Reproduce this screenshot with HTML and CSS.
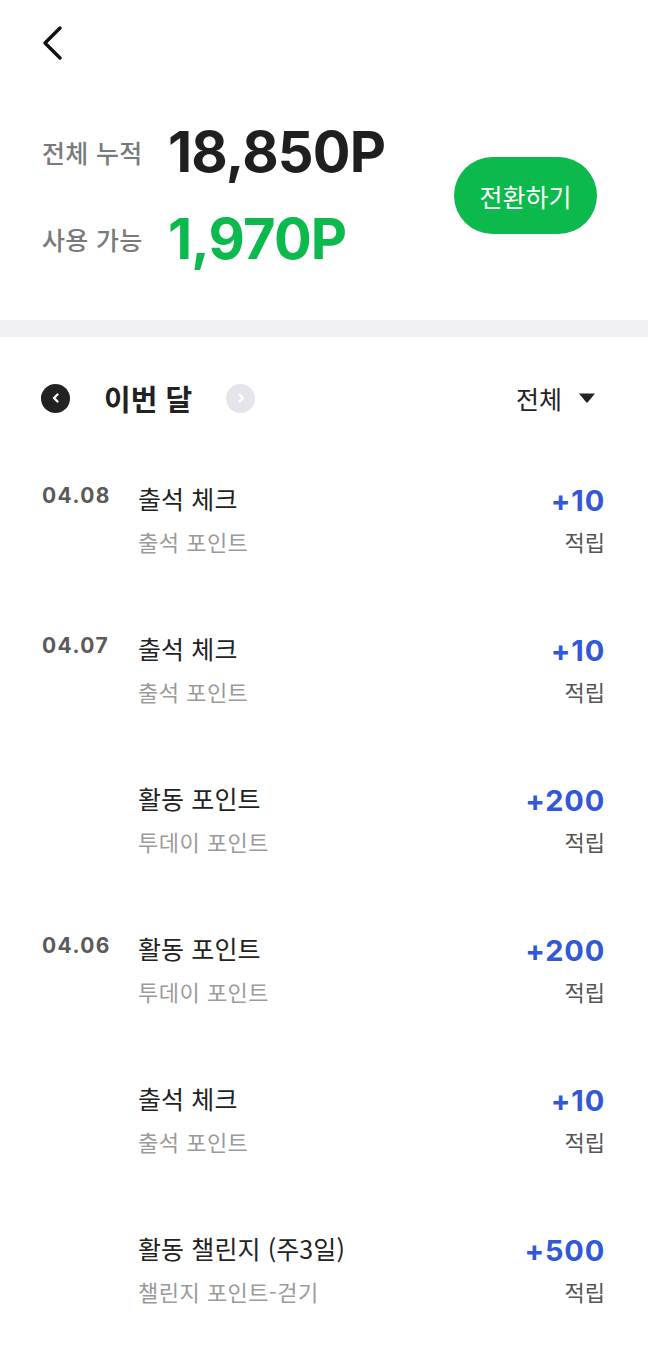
FILE: index.html
```html
<!DOCTYPE html>
<html lang="ko">
<head>
<meta charset="utf-8">
<link rel="stylesheet" href="styles.css">
</head>
<body>
<div class="page">
  <header class="topbar">
    <svg class="back" width="24" height="36" viewBox="0 0 24 36"><path d="M19 3 L4 18 L19 33" fill="none" stroke="#111" stroke-width="3.4" stroke-linecap="round" stroke-linejoin="round"/></svg>
  </header>

  <section class="summary">
    <div class="totals">
      <div class="total-row">
        <span class="total-label">전체 누적</span>
        <span class="total-value">18,850P</span>
      </div>
      <div class="total-row">
        <span class="total-label">사용 가능</span>
        <span class="total-value green">1,970P</span>
      </div>
    </div>
    <button class="convert">전환하기</button>
  </section>

  <div class="divider"></div>

  <section class="month-nav">
    <div class="month-left">
      <span class="circle dark"><svg width="12" height="12" viewBox="0 0 12 12"><path d="M7.5 2.5 L4 6 L7.5 9.5" fill="none" stroke="#fff" stroke-width="2.4" stroke-linecap="round" stroke-linejoin="round"/></svg></span>
      <span class="month-title">이번 달</span>
      <span class="circle light"><svg width="12" height="12" viewBox="0 0 12 12"><path d="M4.5 2.5 L8 6 L4.5 9.5" fill="none" stroke="#fff" stroke-width="2.4" stroke-linecap="round" stroke-linejoin="round"/></svg></span>
    </div>
    <div class="filter">
      <span>전체</span>
      <svg width="18" height="12" viewBox="0 0 18 12"><path d="M1 1.5 H17 L9.8 10.2 Q9 11 8.2 10.2 Z" fill="#222"/></svg>
    </div>
  </section>

  <ul class="list">
    <li class="row">
      <span class="date">04.08</span>
      <div class="info"><div class="title">출석 체크</div><div class="sub">출석 포인트</div></div>
      <div class="amount"><div class="pts">+10</div><div class="kind">적립</div></div>
    </li>
    <li class="row">
      <span class="date">04.07</span>
      <div class="info"><div class="title">출석 체크</div><div class="sub">출석 포인트</div></div>
      <div class="amount"><div class="pts">+10</div><div class="kind">적립</div></div>
    </li>
    <li class="row">
      <span class="date"></span>
      <div class="info"><div class="title">활동 포인트</div><div class="sub">투데이 포인트</div></div>
      <div class="amount"><div class="pts">+200</div><div class="kind">적립</div></div>
    </li>
    <li class="row">
      <span class="date">04.06</span>
      <div class="info"><div class="title">활동 포인트</div><div class="sub">투데이 포인트</div></div>
      <div class="amount"><div class="pts">+200</div><div class="kind">적립</div></div>
    </li>
    <li class="row">
      <span class="date"></span>
      <div class="info"><div class="title">출석 체크</div><div class="sub">출석 포인트</div></div>
      <div class="amount"><div class="pts">+10</div><div class="kind">적립</div></div>
    </li>
    <li class="row">
      <span class="date"></span>
      <div class="info"><div class="title">활동 챌린지 (주3일)</div><div class="sub">챌린지 포인트-걷기</div></div>
      <div class="amount"><div class="pts">+500</div><div class="kind">적립</div></div>
    </li>
  </ul>
</div>
</body>
</html>
```

FILE: styles.css
```css
* { box-sizing: border-box; }
html, body { margin: 0; padding: 0; background: #fff; }
body {
  font-family: "Noto Sans CJK KR", sans-serif;
  color: #222;
  width: 648px;
}
.page { width: 648px; }

.topbar {
  height: 88px;
  padding: 25px 0 0 41px;
}
.back { display: block; }

.summary {
  display: flex;
  align-items: center;
  justify-content: space-between;
  padding: 32px 51px 49px 42px;
}
.totals { display: flex; flex-direction: column; gap: 23px; }
.total-row { display: flex; align-items: center; }
.total-label {
  width: 126px;
  font-size: 25px;
  font-weight: 500;
  color: #7a7a7a;
  letter-spacing: 0.3px;
}
.total-value {
  font-family: Inter, Roboto, sans-serif;
  font-size: 56px;
  font-weight: 700;
  line-height: 64px;
  color: #1f1f1f;
  letter-spacing: -0.8px;
}
.total-value.green { color: #0cb94c; }

.convert {
  width: 143px;
  height: 77px;
  border: 0;
  border-radius: 39px;
  background: #0cb94c;
  color: #fff;
  font-family: "Noto Sans CJK KR", sans-serif;
  font-size: 25px;
  padding: 0;
}

.divider { height: 17px; background: #f1f1f5; }

.month-nav {
  display: flex;
  align-items: center;
  justify-content: space-between;
  padding: 33px 52px 0 41px;
  height: 89px;
}
.month-left { display: flex; align-items: center; }
.circle {
  width: 29px;
  height: 29px;
  border-radius: 50%;
  display: flex;
  align-items: center;
  justify-content: center;
}
.circle.dark { background: #222; }
.circle.light { background: #e4e4ea; }
.month-title {
  font-size: 29px;
  font-weight: 700;
  margin: 0 34px 0 34px;
  line-height: 56px;
}
.filter { display: flex; align-items: center; gap: 16px; }
.filter span {
  font-size: 25px;
  color: #222;
}

.list { list-style: none; margin: 0; padding: 34px 0 0 0; }
.row {
  display: flex;
  align-items: flex-start;
  height: 150px;
  padding: 23px 43px 0 42px;
}
.date {
  width: 96px;
  font-family: Inter, Roboto, sans-serif;
  font-size: 21px;
  font-weight: 700;
  color: #5a5a5a;
  line-height: 26px;
  letter-spacing: 1.4px;
}
.info { flex: 1; }
.title {
  font-size: 25px;
  line-height: 30px;
  color: #222;
  letter-spacing: 0.1px;
}
.sub {
  font-size: 22px;
  line-height: 28px;
  color: #9a9a9a;
  margin-top: 14px;
  letter-spacing: 0.5px;
}
.amount { text-align: right; }
.pts {
  font-family: Inter, Roboto, sans-serif;
  font-size: 29px;
  font-weight: 700;
  line-height: 30px;
  color: #3158d8;
  margin-top: 3px;
  letter-spacing: 0.8px;
}
.kind {
  font-size: 22px;
  line-height: 28px;
  color: #555;
  margin-top: 11px;
}
```
